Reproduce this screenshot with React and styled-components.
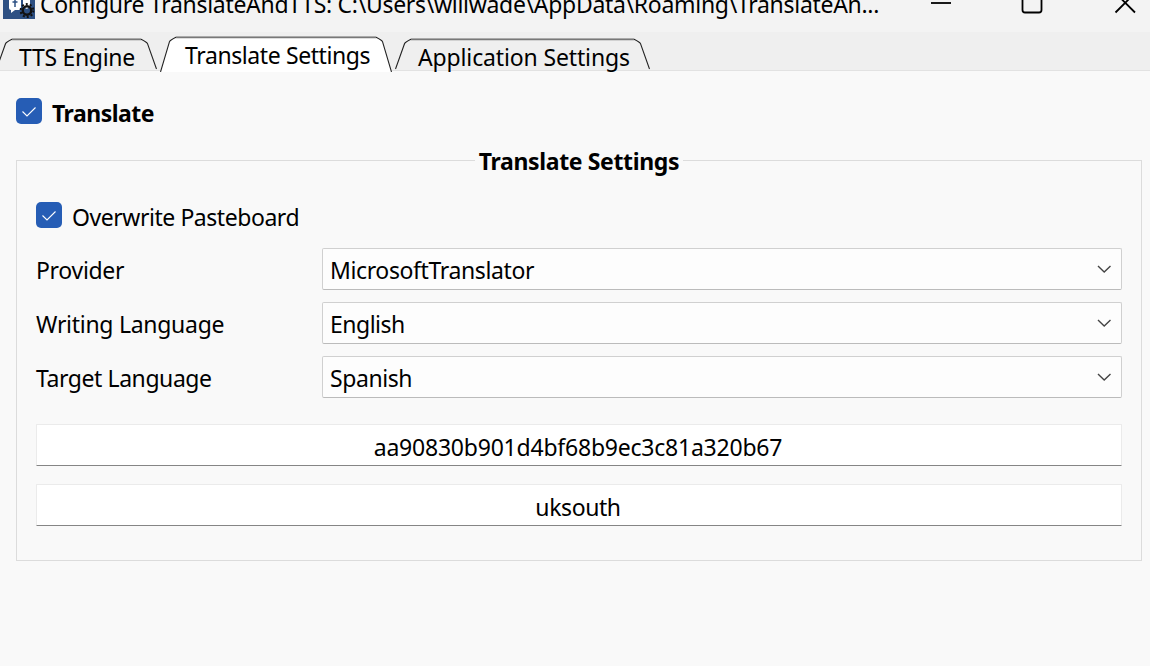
import React from 'react';
import styled, { createGlobalStyle } from 'styled-components';

const Global = createGlobalStyle`
  * { box-sizing: border-box; }
  body { margin: 0; overflow: hidden; background: #f9f9f9; }
`;

const Window = styled.div`
  width: 1150px;
  height: 666px;
  overflow: hidden;
  display: flex;
  flex-direction: column;
  background: #f9f9f9;
  color: #000;
  font: 23px/32px 'Noto Sans', 'Open Sans', sans-serif;
`;

const Label = styled.span`
  display: block;
  white-space: pre;
  letter-spacing: ${(p) => p.$track || 0}px;
  font-weight: ${(p) => (p.$bold ? 700 : 400)};
`;

const TitleBar = styled.header`
  height: 32px;
  flex: none;
  display: flex;
  align-items: flex-start;
  padding-left: 3px;
  background: #f3f3f3;
`;

const AppIcon = styled.svg`
  display: block;
  flex: none;
`;

const TitleText = styled.div`
  width: 884px;
  margin: -12px 0 0 5px;
`;

const Controls = styled.div`
  display: flex;
`;

const TabBar = styled.nav`
  height: 39px;
  flex: none;
  display: flex;
  align-items: flex-start;
  gap: 4px;
  padding-top: 4px;
  background: #efefef;
  border-bottom: 1px solid #e2e2e2;
`;

const TabBox = styled.div`
  position: relative;
  flex: none;
  width: ${(p) => p.$width}px;
  height: 36px;
  margin-left: ${(p) => p.$shift || 0}px;
  padding: ${(p) => (p.$active ? 3 : 5)}px 0 0 ${(p) => p.$inset}px;
`;

const TabShape = styled.svg`
  position: absolute;
  left: 0;
  top: 0;
`;

const TabLabel = styled(Label)`
  position: relative;
`;

const Content = styled.main`
  padding: 26px 8px 0 16px;
`;

const CheckRow = styled.label`
  display: flex;
  height: 32px;
  gap: 10px;
`;

const Box = styled.span`
  flex: none;
  width: 26px;
  height: 26px;
  margin-top: 1px;
  border-radius: 5px;
  background: #265db5;
`;

const Group = styled.fieldset`
  margin: 16px 0 0;
  height: 416px;
  padding: 25px 19px 0;
  border: 1px solid #dcdcdc;
`;

const Legend = styled.legend`
  height: 31px;
  margin: 0 auto;
  padding: 0 4px;
`;

const Field = styled.div`
  display: grid;
  grid-template-columns: 286px 1fr;
  height: 42px;
  margin-top: ${(p) => p.$gap}px;
`;

const FieldName = styled.div`
  padding-top: 6px;
`;

const Select = styled.div`
  display: flex;
  justify-content: space-between;
  padding: 5px 10px 0 7px;
  border: 1px solid #d0d0d0;
  border-bottom-color: #bbb;
  border-radius: 2px;
  background: #fdfdfd;
`;

const Entry = styled.div`
  display: flex;
  justify-content: center;
  height: 42px;
  margin-top: ${(p) => p.$gap}px;
  padding: 6px 2px 0 0;
  border: 1px solid #ebebeb;
  border-bottom-color: #858585;
  border-radius: 1px;
  background: #fff;
`;

function Tab({ text, width, shift, inset, active, track }) {
  const bottom = active ? 36 : 33;
  const top = active ? 1.2 : 3.2;
  const d = `M0.5 ${bottom}L9.5 ${top + 4.5}Q10 ${top + 3} 16 ${top}H${width - 16}Q${width - 10} ${top + 3} ${width - 9.5} ${top + 4.5}L${width - 0.5} ${bottom}`;
  return (
    <TabBox $width={width} $shift={shift} $inset={inset} $active={active}>
      <TabShape width={width} height="36">
        <path d={d} fill={active ? '#fff' : '#efefef'} stroke="#222" strokeWidth="1.1" />
        <path d={`M16 ${top + 0.3}H${width - 16}`} stroke="#787878" strokeWidth="1.6" />
      </TabShape>
      <TabLabel $track={track}>{text}</TabLabel>
    </TabBox>
  );
}

function Check() {
  return (
    <Box>
      <svg width="26" height="26" fill="none" stroke="#fff" strokeWidth="1.1">
        <path d="M6.5 13.500L11 18L19.500 9.500" />
      </svg>
    </Box>
  );
}

function Choice({ name, nameTrack, value, valueTrack, gap }) {
  return (
    <Field $gap={gap}>
      <FieldName><Label $track={nameTrack}>{name}</Label></FieldName>
      <Select>
        <Label $track={valueTrack}>{value}</Label>
        <svg width="14" height="28" fill="none" stroke="#444" strokeWidth="1.4">
          <path d="M1 12L7.200 18L13.500 12" />
        </svg>
      </Select>
    </Field>
  );
}

export default function App() {
  return (
    <Window>
      <Global />
      <TitleBar>
        <AppIcon width="32" height="19">
          <path d="M0 0H32V19H0Z" fill="#2d5083" />
          <path d="M6 0H18V9Q18 10 16 10H12L8 13V10Q6 10 6 8Z" fill="#fff" />
          <path d="M20 0H27V6L24 9L20 7Z" fill="#fff" />
          <path d="M12 0V7M9.5 2H14.5" stroke="#2d5083" strokeWidth="1.5" fill="none" />
          <circle cx="24" cy="10.5" r="4.2" fill="none" stroke="#111" strokeWidth="2.4" />
          <circle cx="24" cy="10.5" r="6.4" fill="none" stroke="#111" strokeWidth="2" strokeDasharray="2 2.02" />
        </AppIcon>
        <TitleText><Label $track={-0.3}>Configure TranslateAndTTS: C:\Users\willwade\AppData\Roaming\TranslateAn...</Label></TitleText>
        <Controls>
          <svg width="226" height="16" fill="none" stroke="#000" strokeWidth="1.8">
            <path d="M7 3H27" />
            <path d="M98.500 -6V10Q98.500 12.500 101 12.500H115Q117.500 12.500 117.500 10V-6" />
            <path d="M191.500 12.500L211 -7M191.500 -7L211 12.500" />
          </svg>
        </Controls>
      </TitleBar>
      <TabBar>
        <Tab text="TTS Engine" width={161} shift={-4} inset={23} track={-0.3} />
        <Tab text="Translate Settings" width={232} inset={25} shift={-1} track={-0.4} active />
        <Tab text="Application Settings" width={255} inset={23} shift={-1} track={-0.14} />
      </TabBar>
      <Content>
        <CheckRow><Check /><Label $bold $track={-0.5}>Translate</Label></CheckRow>
        <Group>
          <Legend><Label $bold $track={-0.35}>Translate Settings</Label></Legend>
          <CheckRow><Check /><Label $track={-0.45}>Overwrite Pasteboard</Label></CheckRow>
          <Choice gap={15} name="Provider" nameTrack={-0.3} value="MicrosoftTranslator" valueTrack={-0.38} />
          <Choice gap={12} name="Writing Language" nameTrack={-0.28} value="English" valueTrack={-0.5} />
          <Choice gap={12} name="Target Language" nameTrack={-0.43} value="Spanish" valueTrack={-0.43} />
          <Entry $gap={26}><Label $track={-0.22}>aa90830b901d4bf68b9ec3c81a320b67</Label></Entry>
          <Entry $gap={18}><Label $track={-0.4}>uksouth</Label></Entry>
        </Group>
      </Content>
    </Window>
  );
}
